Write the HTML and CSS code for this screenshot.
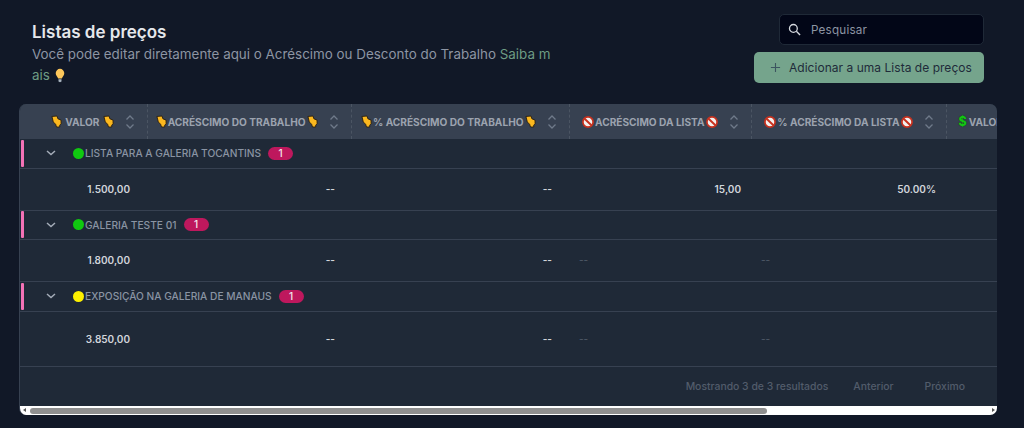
FILE: index.html
```html
<!DOCTYPE html>
<html lang="pt-BR">
<head>
<meta charset="utf-8">
<title>Listas de preços</title>
<link rel="stylesheet" href="styles.css">
</head>
<body>
<svg class="defs" width="0" height="0" aria-hidden="true">
  <symbol id="hand" viewBox="0 0 12 14">
    <path d="M1 1.500 6.500 1l1 3 3.500 1.500v4L9.500 11v2H6L5 10 2.500 7.500Z" fill="#fbb81f" stroke="#2a1f10" stroke-width="1" stroke-linejoin="round"/>
  </symbol>
  <symbol id="ban" viewBox="0 0 12 12">
    <circle cx="6" cy="6" r="5.100" fill="#f3f0ee" stroke="#c8321f" stroke-width="1.700"/>
    <path d="M2.600 2.800 9.400 9.200" stroke="#c8321f" stroke-width="2"/>
  </symbol>
  <symbol id="sort" viewBox="0 0 10 16">
    <path d="M1.500 5.500 5 2l3.500 3.500M1.500 10.500 5 14l3.500-3.500" fill="none" stroke="#6f7a8a" stroke-width="1.300"/>
  </symbol>
  <symbol id="chev" viewBox="0 0 10 6">
    <path d="M1 1l4 3.500L9 1" fill="none" stroke="#a4acb8" stroke-width="1.500"/>
  </symbol>
</svg>
<main class="page">
  <header class="top">
    <div class="intro">
      <h1>Listas de preços</h1>
      <p>Você pode editar diretamente aqui o Acréscimo ou Desconto do Trabalho <a href="#">Saiba m<br>ais</a> <svg class="bulb" viewBox="0 0 10 14" aria-hidden="true"><path d="M5 .8a4 4 0 0 1 4 4.100c0 1.900-1.700 3-2.300 5H3.300C2.700 7.900 1 6.800 1 4.900A4 4 0 0 1 5 .8Z" fill="#fdc75b"/><path d="M3.600 10.500h2.800v2L5 13.400l-1.400-.9Z" fill="#a9b4c0"/></svg></p>
    </div>
    <div class="actions">
      <label class="search">
        <svg viewBox="0 0 14 14" aria-hidden="true"><circle cx="5.800" cy="5.800" r="4.200" fill="none" stroke="#d5d9df" stroke-width="1.400"/><path d="m9 9 4 4" stroke="#d5d9df" stroke-width="1.500"/></svg>
        <span>Pesquisar</span>
      </label>
      <button class="add"><svg viewBox="0 0 12 12" aria-hidden="true"><path d="M6 1v10M1 6h10" stroke="#3c5560" stroke-width="1.200"/></svg>Adicionar a uma Lista de preços</button>
    </div>
  </header>

  <section class="card">
    <div class="viewport">
      <table>
        <colgroup><col class="c1"><col class="c2"><col class="c3"><col class="c4"><col class="c5"><col class="c6"></colgroup>
        <thead>
          <tr>
            <th><div class="th"><svg class="em"><use href="#hand"/></svg><span class="gap">VALOR</span><svg class="em"><use href="#hand"/></svg><svg class="sort"><use href="#sort"/></svg></div></th>
            <th><div class="th"><svg class="em"><use href="#hand"/></svg><span>ACRÉSCIMO DO TRABALHO</span><svg class="em"><use href="#hand"/></svg><svg class="sort"><use href="#sort"/></svg></div></th>
            <th><div class="th"><svg class="em"><use href="#hand"/></svg><span>% ACRÉSCIMO DO TRABALHO</span><svg class="em"><use href="#hand"/></svg><svg class="sort"><use href="#sort"/></svg></div></th>
            <th><div class="th"><svg class="em ban"><use href="#ban"/></svg><span>ACRÉSCIMO DA LISTA</span><svg class="em ban"><use href="#ban"/></svg><svg class="sort"><use href="#sort"/></svg></div></th>
            <th><div class="th"><svg class="em ban"><use href="#ban"/></svg><span>% ACRÉSCIMO DA LISTA</span><svg class="em ban"><use href="#ban"/></svg><svg class="sort"><use href="#sort"/></svg></div></th>
            <th class="last"><div class="th"><span class="dollar">$</span><span>VALOR FINAL</span></div></th>
          </tr>
        </thead>
        <tbody>
          <tr class="group"><td colspan="6"><div class="gr"><i class="mark"></i><svg class="chev"><use href="#chev"/></svg><i class="dot green"></i><span>LISTA PARA A GALERIA TOCANTINS</span><b class="pill">1</b></div></td></tr>
          <tr class="row r42"><td>1.500,00</td><td>--</td><td>--</td><td>15,00</td><td>50.00%</td><td></td></tr>
          <tr class="group"><td colspan="6"><div class="gr"><i class="mark"></i><svg class="chev"><use href="#chev"/></svg><i class="dot green"></i><span>GALERIA TESTE 01</span><b class="pill">1</b></div></td></tr>
          <tr class="row r42"><td>1.800,00</td><td>--</td><td>--</td><td class="muted">--</td><td class="muted">--</td><td></td></tr>
          <tr class="group tall"><td colspan="6"><div class="gr"><i class="mark"></i><svg class="chev"><use href="#chev"/></svg><i class="dot yellow"></i><span>EXPOSIÇÃO NA GALERIA DE MANAUS</span><b class="pill">1</b></div></td></tr>
          <tr class="row r55"><td>3.850,00</td><td>--</td><td>--</td><td class="muted">--</td><td class="muted">--</td><td></td></tr>
        </tbody>
      </table>
      <footer class="foot">
        <span>Mostrando 3 de 3 resultados</span>
        <span class="nav">Anterior</span>
        <span class="nav">Próximo</span>
      </footer>
    </div>
    <div class="bar"><i class="arrow left"></i><i class="thumb"></i><i class="arrow right"></i></div>
  </section>
</main>
</body>
</html>
```
FILE: styles.css
```css
* { box-sizing: border-box; }
html, body { margin: 0; height: 100%; }
body {
  background: #111827;
  font-family: Inter, "Liberation Sans", sans-serif;
  overflow: hidden;
}
.defs { position: absolute; }
.page { padding: 0 27px 0 19px; }
.top {
  display: flex;
  justify-content: space-between;
  height: 104px;
  padding: 14px 13px 0 13px;
}
.intro { width: 540px; }
h1 {
  margin: 7px 0 0;
  font-size: 17px;
  line-height: 22px;
  font-weight: 600;
  color: #e5e7eb;
}
.intro p {
  margin: 0;
  padding-top: 1px;
  font-size: 13.400px;
  line-height: 21px;
  color: #8d95a3;
  white-space: nowrap;
}
.intro a { color: #6e9c84; text-decoration: none; }
.bulb { width: 12px; height: 15px; vertical-align: -3px; }
.actions { display: flex; flex-direction: column; align-items: flex-end; gap: 7px; }
.search {
  display: flex;
  align-items: center;
  width: 205px;
  height: 31px;
  padding-left: 8px;
  background: #020617;
  border: 1px solid #1f2937;
  border-radius: 5px;
  font-size: 11.700px;
  letter-spacing: .2px;
  color: #8d95a3;
}
.search svg { width: 13px; height: 13px; margin-right: 10px; }
.add {
  display: flex;
  align-items: center;
  width: 230px;
  height: 31px;
  padding: 0 0 0 16px;
  border: 0;
  border-radius: 5px;
  background: #75a48c;
  color: #1f2b3a;
  font: 400 12px Inter, "Liberation Sans", sans-serif;
  letter-spacing: .03px;
}
.add svg { width: 11px; height: 11px; margin-right: 8px; }
.card {
  width: 978px;
  height: 311px;
  border-radius: 7px;
  overflow: hidden;
  background: #1f2937;
  border-left: 1px solid #374151;
}
.viewport { height: 302px; overflow: hidden; }
table {
  table-layout: fixed;
  width: 1200px;
  border-collapse: collapse;
}
.c1 { width: 127px; }
.c2 { width: 204px; }
.c3 { width: 218px; }
.c4 { width: 182px; }
.c5 { width: 195px; }
.c6 { width: 274px; }
th { height: 35px; padding: 0; background: #374151; border-right: 1px dashed #4b5563; }
th.last { border-right: 0; }
.th {
  display: flex;
  align-items: center;
  justify-content: flex-end;
  padding-right: 12px;
  font-size: 10.150px;
  font-weight: 700;
  color: #9ca3af;
}
.th .gap { margin: 0 3px; }
.th span { margin: 0 1px; }
.th .em { width: 11px; height: 13px; flex: none; }
.th .em.ban { width: 12px; height: 12px; }
.th .sort { width: 10px; height: 16px; margin-left: 11px; flex: none; }
.last .th { justify-content: flex-start; padding-left: 12px; }
.th .dollar {
  margin: 0 1px 0 0;
  color: #14c414;
  font-weight: 800;
  font-size: 12.500px;
  text-shadow: 0 0 1px #0b2b0b;
}
.group td { height: 29px; padding: 0; border-bottom: 1px solid #374151; }
.group.tall td { height: 30px; }
.gr {
  display: flex;
  align-items: center;
  height: 28px;
  font-size: 10.200px;
  font-weight: 500;
  color: #8a94a3;
}
.tall .gr { height: 29px; }
.mark { width: 3px; height: 27px; margin-left: 1px; background: #f472b6; border-radius: 1px; flex: none; }
.chev { width: 10px; height: 6px; margin-left: 22px; flex: none; }
.dot { width: 11px; height: 11px; border-radius: 50%; margin: 0 1px 0 17px; flex: none; }
.green { background: #10c910; }
.yellow { background: #fdf000; }
.pill {
  height: 13px;
  min-width: 25px;
  margin-left: 7px;
  border-radius: 7px;
  background: #be185d;
  color: #f3e8ee;
  font-size: 10px;
  font-weight: 500;
  line-height: 13px;
  text-align: center;
}
.row td {
  padding: 0 10px 0 0;
  border-bottom: 1px solid #374151;
  text-align: right;
  font-size: 10px;
  font-weight: 600;
  color: #d1d5db;
}
.row td:nth-child(-n+3) { padding-right: 16px; }
.row td:nth-child(odd):nth-child(-n+3) { padding-right: 17px; }
.row td.muted { text-align: left; padding-left: 10px; color: #4b5563; font-weight: 500; }
.r42 td { height: 42px; }
.r55 td { height: 55px; }
.foot {
  display: flex;
  justify-content: flex-end;
  align-items: center;
  height: 40px;
  padding-right: 32px;
  font-size: 10.400px;
  font-weight: 500;
  color: #525c6b;
}
.foot .nav { margin-left: 25px; }
.foot .nav + .nav { margin-left: 31px; }
.bar {
  position: relative;
  display: flex;
  align-items: center;
  height: 9px;
  background: #fff;
}
.thumb { display: block; width: 737px; height: 6px; margin-left: 10px; border-radius: 3px; background: #8f8f8f; }
.arrow { position: absolute; top: 2px; width: 0; height: 0; border-top: 2.500px solid transparent; border-bottom: 2.500px solid transparent; }
.arrow.left { left: 3px; border-right: 3px solid #555; }
.arrow.right { right: 2px; border-left: 3px solid #555; }
```
